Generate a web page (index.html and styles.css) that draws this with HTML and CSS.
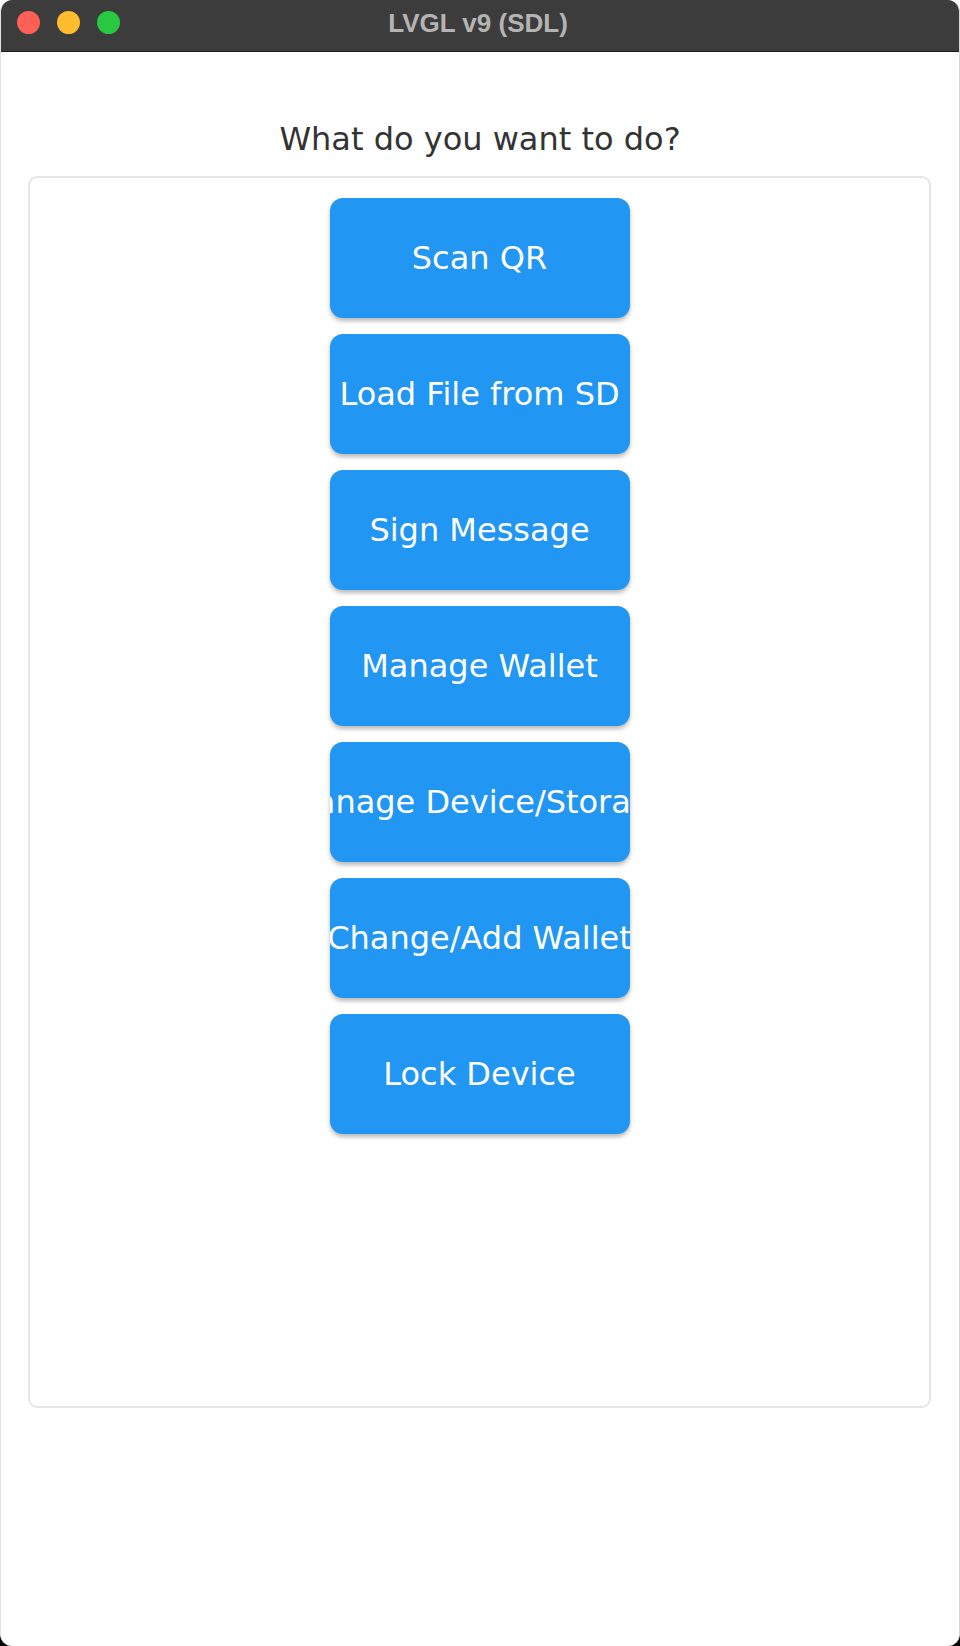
FILE: index.html
```html
<!DOCTYPE html>
<html>
<head>
<meta charset="utf-8">
<title>LVGL v9 (SDL)</title>
<link rel="stylesheet" href="styles.css">
</head>
<body>
<div class="frame">
  <div class="window">
    <div class="titlebar">
      <div class="lights">
        <span class="light red"></span>
        <span class="light yellow"></span>
        <span class="light green"></span>
      </div>
      <div class="title">LVGL v9 (SDL)</div>
      <div class="spacer"></div>
    </div>
    <div class="content">
      <h1 class="heading">What do you want to do?</h1>
      <div class="panel">
        <div class="btn"><span class="label">Scan QR</span></div>
        <div class="btn"><span class="label">Load File from SD</span></div>
        <div class="btn"><span class="label">Sign Message</span></div>
        <div class="btn"><span class="label">Manage Wallet</span></div>
        <div class="btn"><span class="label">Manage Device/Storage</span></div>
        <div class="btn"><span class="label">Change/Add Wallet</span></div>
        <div class="btn"><span class="label">Lock Device</span></div>
      </div>
    </div>
  </div>
</div>
</body>
</html>
```

FILE: styles.css
```css
html, body {
  margin: 0;
  padding: 0;
  background: #ffffff;
}

.frame {
  width: 960px;
  height: 1646px;
  background: linear-gradient(to bottom, #ffffff 0%, #ffffff 50%, #000000 50%, #000000 100%);
}

.window {
  width: 960px;
  height: 1646px;
  box-sizing: border-box;
  border-radius: 12px;
  overflow: hidden;
  background: #ffffff;
  border-left: 1px solid #e2e2e2;
  border-right: 1px solid #d6d6d6;
  display: flex;
  flex-direction: column;
}

.titlebar {
  height: 52px;
  box-sizing: border-box;
  background: #3c3c3c;
  border-bottom: 1px solid #1c1c1c;
  padding-bottom: 6px;
  display: grid;
  grid-template-columns: 1fr auto 1fr;
  align-items: center;
}

.lights {
  display: flex;
  gap: 17px;
  padding-left: 16px;
}

.light {
  width: 23px;
  height: 23px;
  border-radius: 50%;
  display: block;
}
.red { background: #fe5f57; }
.yellow { background: #febc2e; }
.green { background: #28c840; }

.title {
  font-family: "Liberation Sans", Arial, sans-serif;
  font-weight: bold;
  font-size: 26px;
  color: #b4b4b4;
  line-height: 30px;
  margin-right: 4px;
}

.content {
  flex: 1;
  display: flex;
  flex-direction: column;
  align-items: stretch;
}

.heading {
  margin: 68px 0 18px 0;
  font-family: "DejaVu Sans", sans-serif;
  font-weight: normal;
  font-size: 32px;
  line-height: 38px;
  color: #333333;
  text-align: center;
}

.panel {
  margin: 0 28px 0 27px;
  height: 1232px;
  box-sizing: border-box;
  border: 2px solid #e6e6e6;
  border-radius: 9px;
  padding-top: 20px;
  display: flex;
  flex-direction: column;
  align-items: center;
  gap: 16px;
}

.btn {
  width: 300px;
  height: 120px;
  flex-shrink: 0;
  background: #2196f3;
  border-radius: 13px;
  box-shadow: 0 3px 4px rgba(0, 0, 0, 0.28);
  display: flex;
  justify-content: center;
  align-items: center;
  overflow: hidden;
}

.label {
  flex-shrink: 0;
  white-space: nowrap;
  font-family: "DejaVu Sans", sans-serif;
  font-size: 32px;
  line-height: 38px;
  color: #ffffff;
}
```
